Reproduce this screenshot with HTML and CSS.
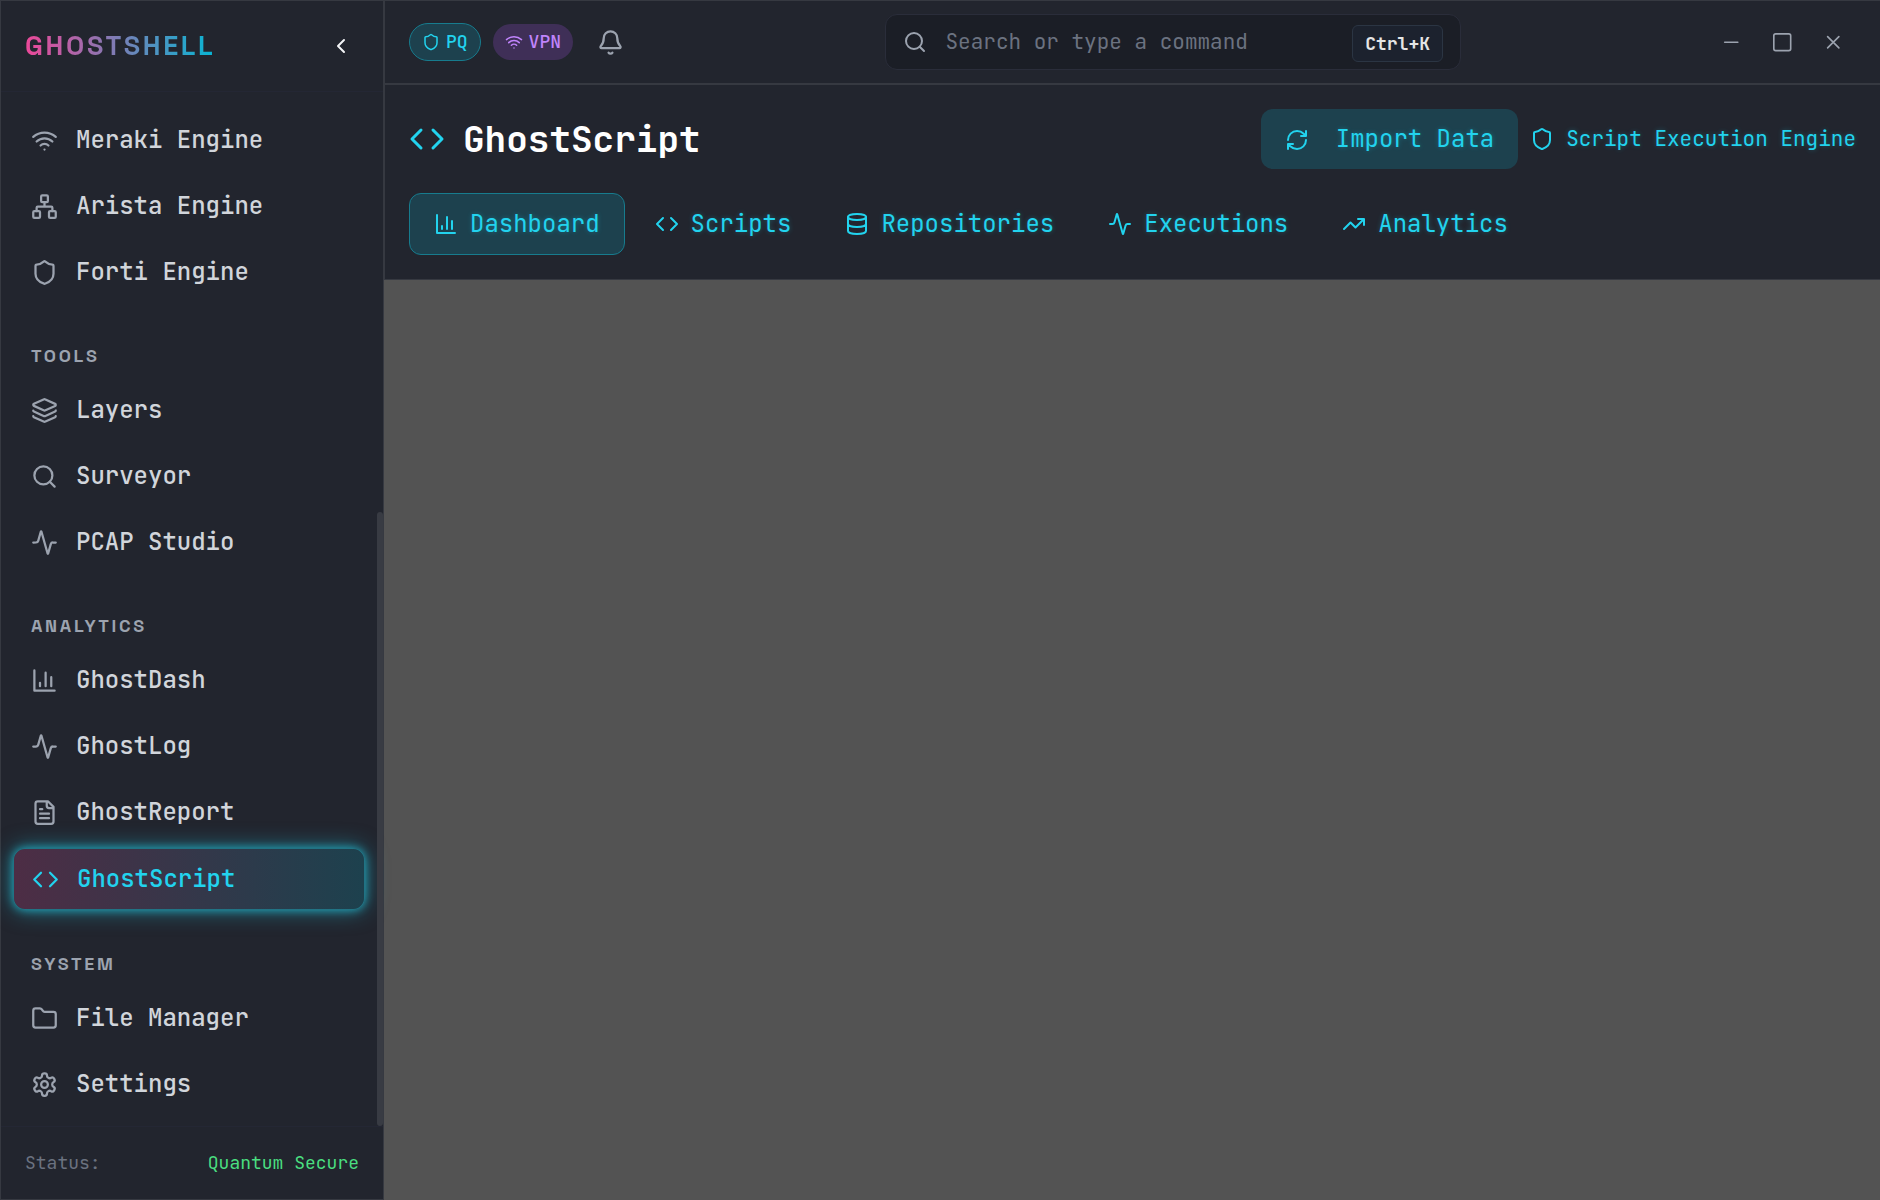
FILE: index.html
```html
<!DOCTYPE html>
<html lang="en">
<head>
<meta charset="utf-8">
<title>GhostShell</title>
<link rel="stylesheet" href="styles.css">
</head>
<body>
<svg class="sprite" aria-hidden="true">
  <symbol id="wifi" viewBox="0 0 24 24"><path d="M12 20h.01M2 8.82a15 15 0 0 1 20 0M5 12.859a10 10 0 0 1 14 0M8.5 16.429a5 5 0 0 1 7 0"/></symbol>
  <symbol id="network" viewBox="0 0 24 24"><rect x="16" y="16" width="6" height="6" rx="1"/><rect x="2" y="16" width="6" height="6" rx="1"/><rect x="9" y="2" width="6" height="6" rx="1"/><path d="M5 16v-3a1 1 0 0 1 1-1h12a1 1 0 0 1 1 1v3M12 12V8"/></symbol>
  <symbol id="shield" viewBox="0 0 24 24"><path d="M20 13c0 5-3.5 7.5-7.66 8.95a1 1 0 0 1-.67-.01C7.5 20.5 4 18 4 13V6a1 1 0 0 1 1-1c2 0 4.5-1.2 6.24-2.72a1.17 1.17 0 0 1 1.52 0C14.51 3.81 17 5 19 5a1 1 0 0 1 1 1z"/></symbol>
  <symbol id="layers" viewBox="0 0 24 24"><path d="M12.83 2.18a2 2 0 0 0-1.66 0L2.6 6.08a1 1 0 0 0 0 1.83l8.58 3.91a2 2 0 0 0 1.66 0l8.58-3.9a1 1 0 0 0 0-1.83zM2 12a1 1 0 0 0 .58.91l8.6 3.91a2 2 0 0 0 1.65 0l8.58-3.9A1 1 0 0 0 22 12M2 17a1 1 0 0 0 .58.91l8.6 3.91a2 2 0 0 0 1.65 0l8.58-3.9A1 1 0 0 0 22 17"/></symbol>
  <symbol id="search" viewBox="0 0 24 24"><circle cx="11" cy="11" r="8"/><path d="m21 21-4.3-4.3"/></symbol>
  <symbol id="activity" viewBox="0 0 24 24"><path d="M22 12h-2.48a2 2 0 0 0-1.93 1.46l-2.35 8.36a.25.25 0 0 1-.48 0L9.24 2.18a.25.25 0 0 0-.48 0l-2.35 8.36A2 2 0 0 1 4.49 12H2"/></symbol>
  <symbol id="chart" viewBox="0 0 24 24"><path d="M3 3v18h18M18 17V9M13 17V5M8 17v-3"/></symbol>
  <symbol id="file" viewBox="0 0 24 24"><path d="M15 2H6a2 2 0 0 0-2 2v16a2 2 0 0 0 2 2h12a2 2 0 0 0 2-2V7ZM14 2v4a2 2 0 0 0 2 2h4M10 9H8M16 13H8M16 17H8"/></symbol>
  <symbol id="code" viewBox="0 0 24 24"><path d="m16 18 6-6-6-6M8 6l-6 6 6 6"/></symbol>
  <symbol id="folder" viewBox="0 0 24 24"><path d="M20 20a2 2 0 0 0 2-2V8a2 2 0 0 0-2-2h-7.9a2 2 0 0 1-1.69-.9L9.6 3.9A2 2 0 0 0 7.93 3H4a2 2 0 0 0-2 2v13a2 2 0 0 0 2 2Z"/></symbol>
  <symbol id="settings" viewBox="0 0 24 24"><path d="M12.22 2h-.44a2 2 0 0 0-2 2v.18a2 2 0 0 1-1 1.73l-.43.25a2 2 0 0 1-2 0l-.15-.08a2 2 0 0 0-2.73.73l-.22.38a2 2 0 0 0 .73 2.73l.15.1a2 2 0 0 1 1 1.72v.51a2 2 0 0 1-1 1.74l-.15.09a2 2 0 0 0-.73 2.73l.22.38a2 2 0 0 0 2.73.73l.15-.08a2 2 0 0 1 2 0l.43.25a2 2 0 0 1 1 1.73V20a2 2 0 0 0 2 2h.44a2 2 0 0 0 2-2v-.18a2 2 0 0 1 1-1.73l.43-.25a2 2 0 0 1 2 0l.15.08a2 2 0 0 0 2.73-.73l.22-.39a2 2 0 0 0-.73-2.73l-.15-.08a2 2 0 0 1-1-1.74v-.5a2 2 0 0 1 1-1.74l.15-.09a2 2 0 0 0 .73-2.73l-.22-.38a2 2 0 0 0-2.73-.73l-.15.08a2 2 0 0 1-2 0l-.43-.25a2 2 0 0 1-1-1.73V4a2 2 0 0 0-2-2z"/><circle cx="12" cy="12" r="3"/></symbol>
  <symbol id="chevron" viewBox="0 0 24 24"><path d="m15 18-6-6 6-6"/></symbol>
  <symbol id="bell" viewBox="0 0 24 24"><path d="M10.27 21a2 2 0 0 0 3.46 0M3.26 15.33A1 1 0 0 0 4 17h16a1 1 0 0 0 .74-1.67C19.41 13.96 18 12.5 18 8A6 6 0 0 0 6 8c0 4.5-1.41 5.96-2.74 7.33"/></symbol>
  <symbol id="refresh" viewBox="0 0 24 24"><path d="M3 12a9 9 0 0 1 9-9 9.75 9.75 0 0 1 6.74 2.74L21 8M21 3v5h-5M21 12a9 9 0 0 1-9 9 9.75 9.75 0 0 1-6.74-2.74L3 16M8 16H3v5"/></symbol>
  <symbol id="database" viewBox="0 0 24 24"><ellipse cx="12" cy="5" rx="9" ry="3"/><path d="M3 5v14a9 3 0 0 0 18 0V5M3 12a9 3 0 0 0 18 0"/></symbol>
  <symbol id="trend" viewBox="0 0 24 24"><path d="m22 7-8.5 8.5-5-5L2 17M16 7h6v6"/></symbol>
  <symbol id="minus" viewBox="0 0 24 24"><path d="M5 12h14"/></symbol>
  <symbol id="square" viewBox="0 0 24 24"><rect x="3" y="3" width="18" height="18" rx="2"/></symbol>
  <symbol id="close" viewBox="0 0 24 24"><path d="M18 6 6 18M6 6l12 12"/></symbol>
</svg>

<div class="app">
  <aside class="sidebar">
    <div class="brand">
      <span class="logo">GHOSTSHELL</span>
      <svg class="icon collapse"><use href="#chevron"/></svg>
    </div>
    <nav class="nav">
      <a class="item"><svg class="icon"><use href="#wifi"/></svg><span>Meraki Engine</span></a>
      <a class="item"><svg class="icon"><use href="#network"/></svg><span>Arista Engine</span></a>
      <a class="item"><svg class="icon"><use href="#shield"/></svg><span>Forti Engine</span></a>
      <h2 class="group">TOOLS</h2>
      <a class="item"><svg class="icon"><use href="#layers"/></svg><span>Layers</span></a>
      <a class="item"><svg class="icon"><use href="#search"/></svg><span>Surveyor</span></a>
      <a class="item"><svg class="icon"><use href="#activity"/></svg><span>PCAP Studio</span></a>
      <h2 class="group">ANALYTICS</h2>
      <a class="item"><svg class="icon"><use href="#chart"/></svg><span>GhostDash</span></a>
      <a class="item"><svg class="icon"><use href="#activity"/></svg><span>GhostLog</span></a>
      <a class="item"><svg class="icon"><use href="#file"/></svg><span>GhostReport</span></a>
      <a class="item active"><svg class="icon"><use href="#code"/></svg><span>GhostScript</span></a>
      <h2 class="group">SYSTEM</h2>
      <a class="item"><svg class="icon"><use href="#folder"/></svg><span>File Manager</span></a>
      <a class="item"><svg class="icon"><use href="#settings"/></svg><span>Settings</span></a>
      <div class="thumb"></div>
    </nav>
    <div class="status"><span>Status:</span><span class="secure">Quantum Secure</span></div>
  </aside>

  <div class="main">
    <header class="topbar">
      <div class="badges">
        <span class="badge pq"><svg class="icon"><use href="#shield"/></svg><span class="label">PQ</span></span>
        <span class="badge vpn"><svg class="icon"><use href="#wifi"/></svg><span class="label">VPN</span></span>
        <svg class="icon bell"><use href="#bell"/></svg>
      </div>
      <div class="search">
        <svg class="icon"><use href="#search"/></svg>
        <span class="hint">Search or type a command</span>
        <kbd class="key">Ctrl+K</kbd>
      </div>
      <div class="controls">
        <svg class="icon"><use href="#minus"/></svg>
        <svg class="icon"><use href="#square"/></svg>
        <svg class="icon"><use href="#close"/></svg>
      </div>
    </header>
    <section class="page-head">
      <div class="title-row">
        <svg class="icon title-icon"><use href="#code"/></svg>
        <h1 class="title">GhostScript</h1>
        <button class="import"><svg class="icon"><use href="#refresh"/></svg>Import Data</button>
        <div class="engine"><svg class="icon"><use href="#shield"/></svg>Script Execution Engine</div>
      </div>
      <div class="tabs">
        <a class="tab current"><svg class="icon"><use href="#chart"/></svg>Dashboard</a>
        <a class="tab"><svg class="icon"><use href="#code"/></svg>Scripts</a>
        <a class="tab"><svg class="icon"><use href="#database"/></svg>Repositories</a>
        <a class="tab"><svg class="icon"><use href="#activity"/></svg>Executions</a>
        <a class="tab"><svg class="icon"><use href="#trend"/></svg>Analytics</a>
      </div>
    </section>
    <main class="canvas"></main>
  </div>
</div>
</body>
</html>
```
FILE: styles.css
```css
* { box-sizing: border-box; }

body {
  margin: 0;
  background: #22252e;
  font-family: "JetBrains Mono", "DejaVu Sans Mono", "Liberation Mono", monospace;
  line-height: 1.5;
  color: #d1d5db;
}

.sprite { display: none; }

.icon {
  flex: none;
  width: 24px;
  height: 24px;
  fill: none;
  stroke: currentColor;
  stroke-width: 2;
  stroke-linecap: round;
  stroke-linejoin: round;
}

.app {
  display: flex;
  width: 1880px;
  height: 1200px;
  overflow: hidden;
}

/* Sidebar */
.sidebar {
  display: flex;
  flex-direction: column;
  width: 384px;
  border: 1px solid #363941;
}

.brand {
  display: flex;
  align-items: center;
  justify-content: space-between;
  height: 91px;
  padding: 0 30px 0 24px;
  border-bottom: 1px solid #242734;
}

.logo {
  font: 600 27px/32px "Space Grotesk", Inter, sans-serif;
  letter-spacing: 2.7px;
  background: linear-gradient(90deg, #ec4899, #06b6d4);
  -webkit-background-clip: text;
  background-clip: text;
  color: transparent;
}

.collapse { color: #f3f4f6; }

.nav {
  position: relative;
  flex: 1;
  display: flex;
  flex-direction: column;
  gap: 6px;
  padding: 18px 18px 0 12px;
}

.item {
  display: flex;
  align-items: center;
  gap: 18px;
  height: 60px;
  padding-left: 18px;
  font-size: 24px;
  font-weight: 500;
}

.item .icon {
  width: 27px;
  height: 27px;
  color: #9ca3af;
}

.item.active {
  height: 62px;
  border: 1px solid rgba(34, 211, 238, 0.45);
  border-radius: 12px;
  background: linear-gradient(90deg, #4d2d45, #1d414e);
  background-clip: padding-box;
  box-shadow: 0 0 9px rgba(34, 211, 238, 0.6), 0 0 22px rgba(34, 211, 238, 0.5);
  color: #22d3ee;
}

.item.active .icon { color: #22d3ee; }

.group {
  display: flex;
  align-items: center;
  height: 24px;
  margin: 36px 0 6px;
  padding-left: 18px;
  font: 600 18px/24px "Space Grotesk", Inter, sans-serif;
  letter-spacing: 2.7px;
  color: #9ca3af;
}

.thumb {
  position: absolute;
  right: 0;
  bottom: 0;
  width: 6px;
  height: 614px;
  border-radius: 3px;
  background: #383b43;
}

.status {
  display: flex;
  justify-content: space-between;
  align-items: center;
  height: 73px;
  padding: 0 24px 2px;
  border-top: 1px solid #242734;
  font-size: 18px;
  color: #6b7280;
}

.secure { color: #4ade80; }

/* Top bar */
.main {
  flex: 1;
  display: flex;
  flex-direction: column;
}

.topbar {
  display: flex;
  align-items: center;
  height: 85px;
  padding: 0 34px 0 24px;
  border: solid #363941;
  border-width: 1px 0 2px 1px;
}

.badges {
  display: flex;
  align-items: center;
  gap: 12px;
  width: 476px;
}

.badge {
  display: flex;
  align-items: center;
  gap: 6px;
  height: 36px;
  padding: 0 12px;
  border-radius: 18px;
  font-size: 18px;
  font-weight: 500;
}

.badge .icon { width: 18px; height: 18px; }

.label { margin-bottom: 2px; }

.pq {
  height: 38px;
  border: 1px solid #177c8e;
  border-radius: 19px;
  background: #1d414e;
  color: #22d3ee;
}

.vpn { background: #3f2f57; color: #c084fc; }

.bell {
  width: 27px;
  height: 27px;
  margin-left: 12px;
  color: #9ca3af;
}

.search {
  display: flex;
  align-items: center;
  width: 576px;
  height: 56px;
  padding: 0 17px;
  border: 1px solid #2a2d3a;
  border-radius: 12px;
  background: #1b1e26;
  color: #9ca3af;
}

.hint {
  flex: 1;
  margin-left: 18.5px;
  font-size: 21px;
  color: #6b7280;
}

.key {
  height: 37px;
  margin-top: 3px;
  padding: 0 12px;
  border: 1px solid #2b3543;
  border-radius: 6px;
  background: #1c222e;
  font: 600 18px/35px "JetBrains Mono", "DejaVu Sans Mono", monospace;
  color: #e5e5e5;
}

.controls {
  display: flex;
  gap: 28.5px;
  margin-left: auto;
  padding-right: 2px;
  color: #9ca3af;
}

.controls .icon { width: 22.5px; height: 22.5px; stroke-width: 1.75; }

/* Page header */
.page-head {
  height: 195px;
  padding: 24px 24px 0 24px;
  border: solid #363941;
  border-width: 0 0 1px 1px;
}

.title-row {
  display: flex;
  align-items: center;
  height: 60px;
}

.title-icon { width: 36px; height: 36px; color: #22d3ee; }

.title {
  margin: 0 auto 0 18px;
  font-size: 36px;
  line-height: 54px;
  font-weight: 700;
  color: #fff;
}

.import,
.engine,
.tab {
  display: flex;
  align-items: center;
  color: #22d3ee;
  text-shadow: 0 0 5px rgba(34, 211, 238, 0.3);
}

.import {
  gap: 27px;
  height: 60px;
  margin: 0 12px 0 0;
  padding: 0 24px;
  border: 0;
  border-radius: 12px;
  background: #1d414e;
  font-family: inherit;
  font-size: 24px;
  line-height: 36px;
}

.import .icon { margin-top: 2px; }

.engine { gap: 12px; font-size: 21px; }

.tabs {
  display: flex;
  align-items: center;
  gap: 6px;
  margin-top: 24px;
}

.tab {
  gap: 12px;
  height: 60px;
  padding: 0 24px;
  border-radius: 12px;
  font-size: 24px;
}

.tab.current {
  height: 62px;
  border: 1px solid #177c8e;
  background: #1d414e;
}

.canvas { flex: 1; background: #535353; }
```
